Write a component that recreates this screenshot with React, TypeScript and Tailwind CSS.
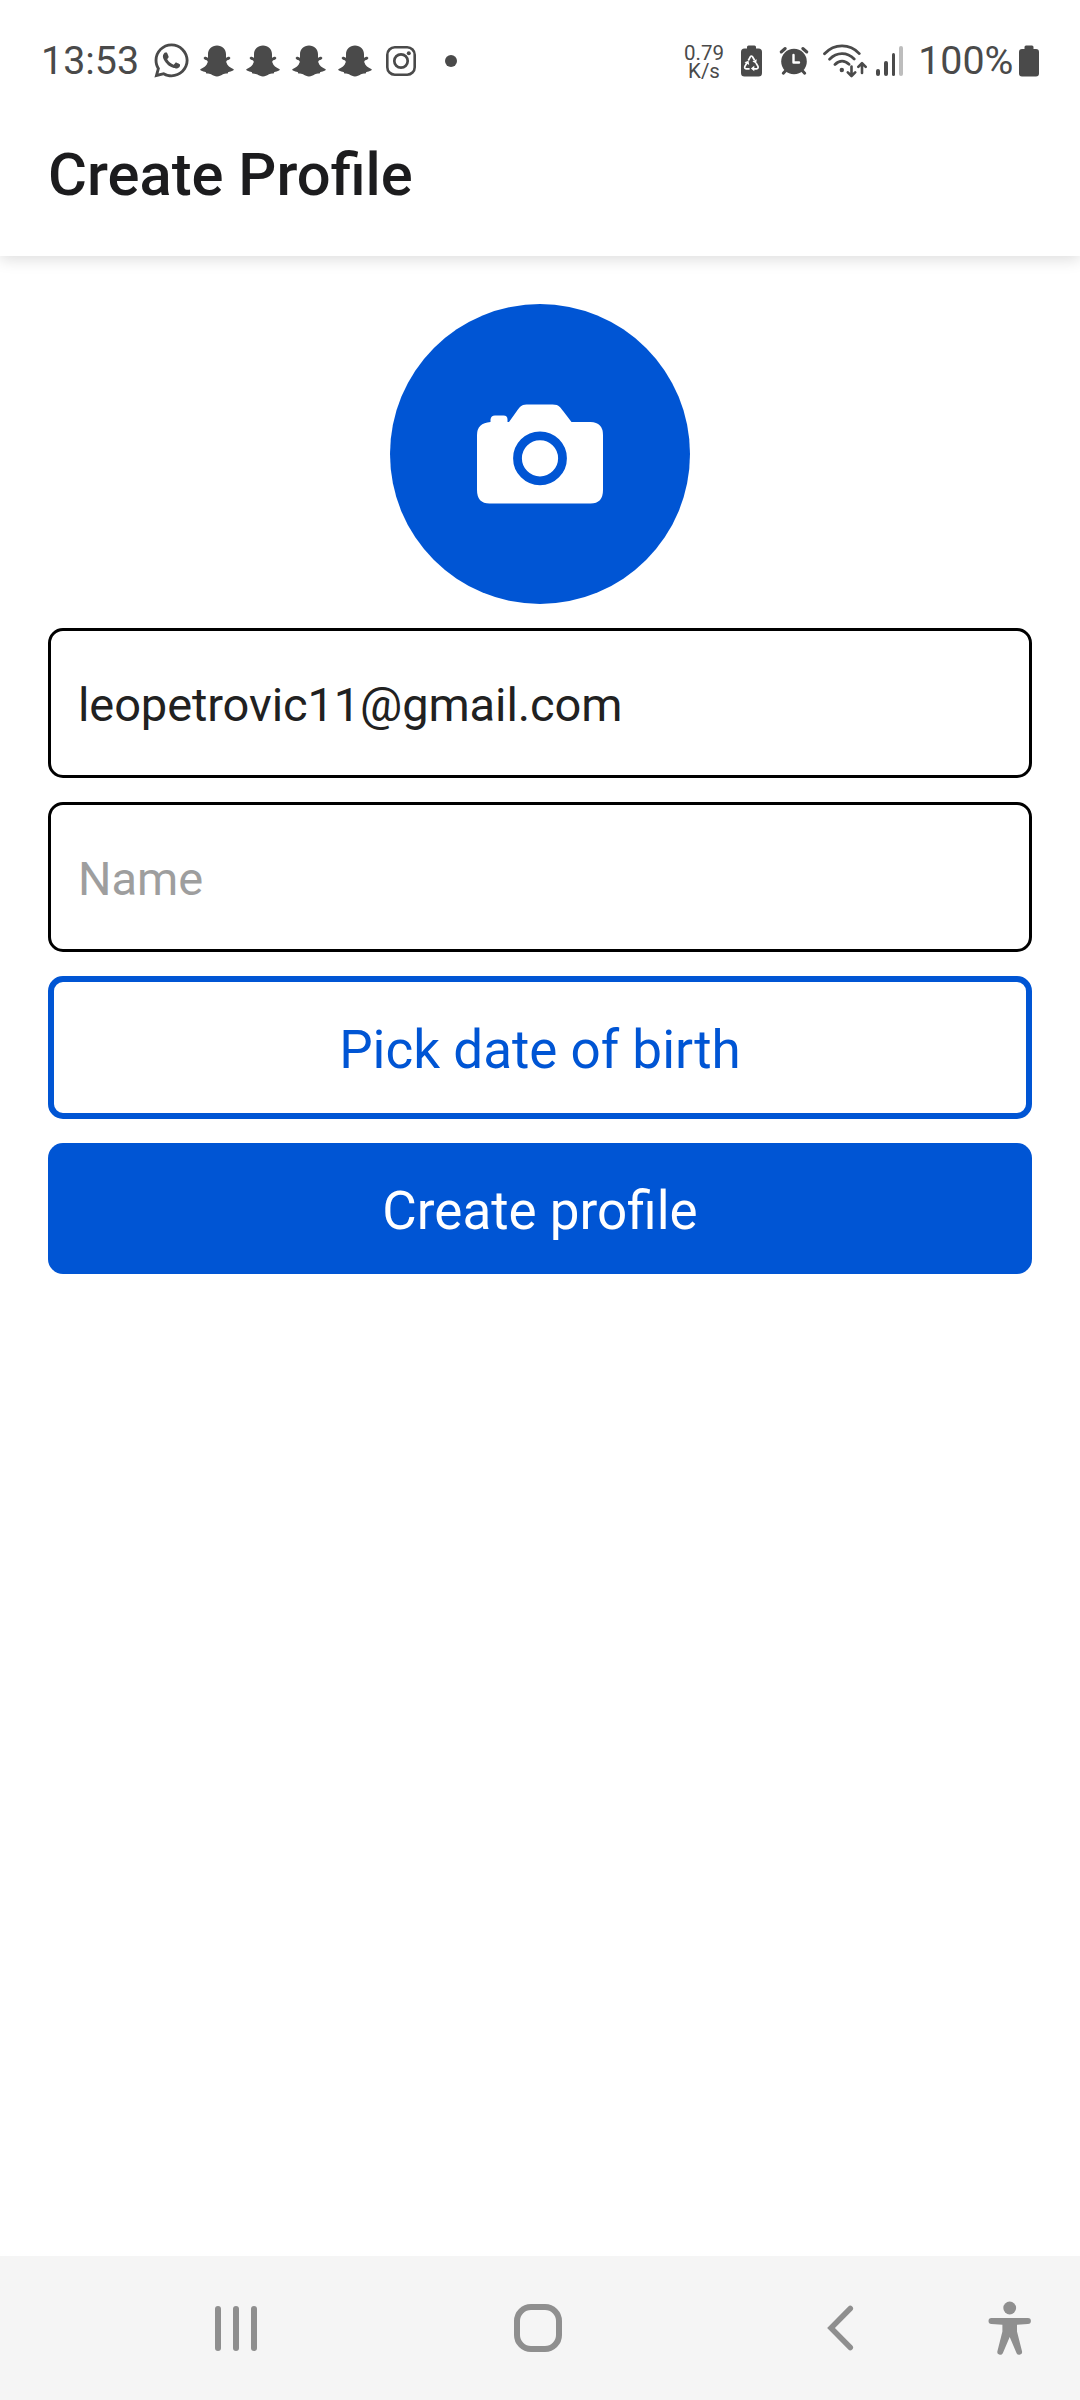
import type { ReactNode } from "react";
import { FaWhatsapp } from "react-icons/fa";

function Snap() {
  return (
    <svg className="mt-px h-8 w-[34px] shrink-0" viewBox="0 0 34 32" fill="currentColor">
      <path d="M17 .5c5.200 0 9 3.600 9 8.800v3.400c1.200-.2 2.400-1.100 3.500-.8 1.300.5 1 1.900-.2 2.500-1.500.7-3.400.9-3 2.800 1.200 3.700 3.700 5.400 6.900 6.700.9.400.7 1.100-.1 1.500-1.700.9-3.200 1.100-4.600 1.500-.7.300-.5 1.500-1.300 1.700-1.700.2-3.200.1-4.700.9-1.700.9-3.200 2-5.500 2s-3.800-1.100-5.500-2c-1.500-.8-3-.7-4.700-.9-.8-.2-.6-1.400-1.300-1.700-1.400-.4-2.900-.6-4.600-1.500-.8-.4-1-1.100-.1-1.500 3.200-1.300 5.700-3 6.900-6.700.4-1.900-1.500-2.100-3-2.800-1.200-.6-1.500-2-.2-2.500 1.100-.3 2.300.6 3.500.8V9.300C8 4.100 11.800.5 17 .5z" />
    </svg>
  );
}

function StatusBar() {
  return (
    <div className="flex h-[121px] items-center pl-[41px] text-[#4a4a4a]">
      <span className="w-[112px] text-[39.400px] leading-none">13:53</span>
      <FaWhatsapp className="-ml-px h-[39px] w-[39px] shrink-0" />
      <div className="ml-[9px] flex gap-3">
        <Snap />
        <Snap />
        <Snap />
        <Snap />
      </div>
      <svg className="ml-[14px] h-[30px] w-[30px] shrink-0" viewBox="0 0 30 30" fill="none" stroke="currentColor">
        <rect x="1.300" y="1.300" width="27.400" height="27.400" rx="7.500" strokeWidth="2.600" />
        <circle cx="15" cy="15" r="6.700" strokeWidth="2.700" />
        <circle cx="22.800" cy="7.200" r="2" fill="currentColor" stroke="none" />
      </svg>
      <div className="ml-[29px] h-3 w-3 rounded-full bg-[#4a4a4a]" />

      <div className="ml-[225px] w-[44px] pt-[2px] text-center text-[20.500px] leading-[18px] whitespace-pre-line">
        {"0.79\nK/s"}
      </div>
      <svg className="ml-[15px] h-8 w-[21px] shrink-0" viewBox="0 0 21 32">
        <path fill="currentColor" d="M6 3.500V2Q6 .5 7.500.5h6Q15 .5 15 2v1.500h2.500Q21 3.500 21 7v21q0 3.500-3.500 3.500h-14Q0 31.500 0 28V7q0-3.500 3.500-3.500z" />
        <g fill="none" stroke="#fff" strokeWidth="1.700" strokeLinejoin="round">
          <path d="M7.300 15.500 9.300 11.800Q10.400 10.200 11.500 11.800L13.600 15.300M15 18l2 3.400Q17.600 23.600 15.500 23.800H12.200M8.600 23.800H5.200Q3.100 23.500 3.900 21.400L5.800 18" />
        </g>
        <path fill="#fff" d="m15.800 14.200-.7 4.200-3.700-2zM13.300 20.700v5.600l-3.400-2.700zM3.500 17.300l4-1.600.7 4.200z" />
      </svg>
      <svg className="ml-[17px] h-[30px] w-[30px] shrink-0" viewBox="0 0 30 30" stroke="currentColor" fill="none" strokeLinecap="round">
        <circle cx="15" cy="15.500" r="12.800" fill="currentColor" stroke="none" />
        <path strokeWidth="3" d="M2.200 6 6.200 2.500M27.800 6 23.800 2.500M4.300 27.200l3-3.200M25.700 27.200l-3-3.200" />
        <path stroke="#fff" strokeWidth="2.400" strokeLinejoin="round" d="M14.500 9v7.500H20" />
      </svg>
      <svg className="ml-[14px] h-[34px] w-[44px] shrink-0" viewBox="0 0 44 34" stroke="currentColor" fill="none" strokeWidth="2.800" strokeLinecap="round" strokeLinejoin="round">
        <path d="M1.500 9.800C11.500-.6 26.500-.6 36.300 9.600M6.600 15.200c7.300-7.300 17.500-7.300 24.600-.2M12 20.500c4.400-4.400 9.700-4.400 14-.2" />
        <circle cx="18.800" cy="26" r="2.200" fill="currentColor" stroke="none" />
        <path strokeWidth="2.600" d="M28.500 22.500v9M24.800 28.300l3.700 3.700 3.700-3.700M39 29v-9.500M35.300 22.800l3.700-3.700 3.700 3.700" />
      </svg>
      <div className="ml-[9px] flex h-[30px] items-end gap-1">
        <i className="h-[7px] w-[3.800px] rounded-full bg-[#4a4a4a]" />
        <i className="h-[15px] w-[3.800px] rounded-full bg-[#4a4a4a]" />
        <i className="h-[23px] w-[3.800px] rounded-full bg-[#4a4a4a]" />
        <i className="h-[30px] w-[3.800px] rounded-full bg-[#bdbdbd]" />
      </div>
      <span className="ml-[15px] w-[101px] text-[39.400px] leading-none">100%</span>
      <svg className="mt-px h-8 w-5 shrink-0" viewBox="0 0 20 32" fill="currentColor">
        <path d="M5.500 4V2Q5.500.5 7 .5h6q1.500 0 1.500 1.500v2H17q3 0 3 3v21.500q0 3-3 3H3q-3 0-3-3V7q0-3 3-3z" />
      </svg>
    </div>
  );
}

function Field({ children }: { children: ReactNode }) {
  return (
    <div className="flex h-[150px] items-center rounded-[15px] border-[3px] border-black pt-[3px] pl-[27px] text-[47px] leading-none">
      {children}
    </div>
  );
}

function NavBar() {
  return (
    <nav className="flex h-36 items-center bg-[#f5f5f5] text-[#8f8f8f]">
      <div className="ml-[215px] flex gap-3">
        <i className="h-[45px] w-1.5 rounded-full bg-[#8f8f8f]" />
        <i className="h-[45px] w-1.5 rounded-full bg-[#8f8f8f]" />
        <i className="h-[45px] w-1.5 rounded-full bg-[#8f8f8f]" />
      </div>
      <div className="ml-[257px] h-12 w-12 rounded-[17px] border-[6px] border-[#8f8f8f]" />
      <svg className="ml-[264px] h-12 w-7" viewBox="0 0 28 48" fill="none" stroke="currentColor" strokeWidth="5.500" strokeLinecap="round">
        <path d="M24.300 4.500 5 24l19.300 19.500" />
      </svg>
      <svg className="ml-[134px] h-[54px] w-11" viewBox="0 0 44 54" fill="currentColor">
        <circle cx="21.700" cy="7" r="6.400" />
        <path d="M3.500 17h36.400a3 3 0 0 1 0 6L29 23.800v6.700l5 19.700a2.900 2.900 0 0 1-5.400 2L21.700 36l-6.900 16.200a2.900 2.900 0 0 1-5.400-2l5-19.700v-6.700L3.500 23a3 3 0 0 1 0-6z" />
      </svg>
    </nav>
  );
}

export default function App() {
  return (
    <div className="flex h-[2400px] w-[1080px] flex-col bg-white font-[Roboto,sans-serif]">
      <header className="h-64 shadow-[0_4px_14px_rgba(0,0,0,0.13)]">
        <StatusBar />
        <h1 className="pt-[24px] pl-12 text-[59.700px] leading-[60px] font-medium text-[#1c1c1e]">Create Profile</h1>
      </header>
      <main className="flex flex-1 flex-col gap-6 px-12 pt-12">
        <div className="flex h-[300px] w-[300px] items-center justify-center self-center rounded-full bg-[#0055d4]">
          <svg className="h-[100px] w-[126px]" viewBox="0.500 0 126 100">
            <path fill="#fff" d="M50 .5H76C83 .5 84 4 87 7.500L95 18H114Q126.500 18.500 126.500 31V86Q126.500 99.500 114 99.500H13Q.5 99.500.5 86V31Q.5 19 14 18V15.500Q14.500 11.500 18.500 11.500H27Q31 11.500 31 15.500V18H32.500L40 7.500C43 3.500 44.500.5 50 .5Z" />
            <circle cx="63.500" cy="54.300" r="22.500" fill="none" stroke="#0055d4" strokeWidth="8.800" />
          </svg>
        </div>
        <Field>
          <span className="tracking-[-0.1px] text-[#212121]">leopetrovic11@gmail.com</span>
        </Field>
        <Field>
          <span className="text-[#9e9e9e]">Name</span>
        </Field>
        <button className="h-[143px] rounded-[15px] border-[6px] border-[#0055d4] pt-[5px] text-[53px] leading-none text-[#0055d4]">
          Pick date of birth
        </button>
        <button className="h-[131px] rounded-[15px] bg-[#0055d4] pt-[5px] text-[53px] leading-none text-white">
          Create profile
        </button>
      </main>
      <NavBar />
    </div>
  );
}
